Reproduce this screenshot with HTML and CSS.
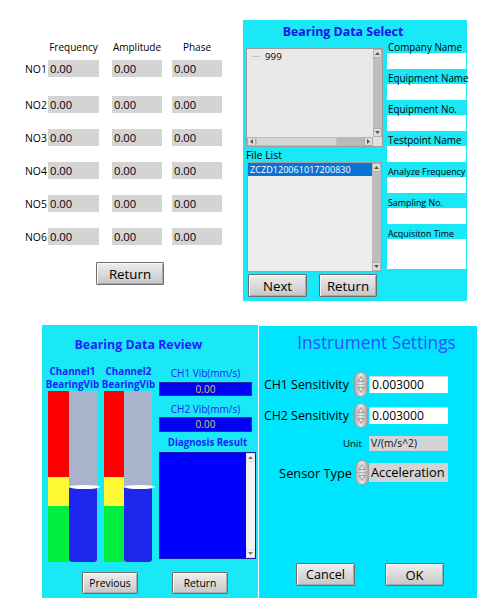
FILE: index.html
```html
<!DOCTYPE html>
<html>
<head>
<meta charset="utf-8">
<link rel="stylesheet" href="styles.css">
</head>
<body>
<div class="top">
  <section class="peaks">
    <div class="prow head"><span></span><span class="h w51">Frequency</span><span class="h w50">Amplitude</span><span class="h w50">Phase</span></div>
    <div class="prow r1"><span class="no">NO1</span><span class="val w51">0.00</span><span class="val w50">0.00</span><span class="val w50">0.00</span></div>
    <div class="prow r2"><span class="no">NO2</span><span class="val w51">0.00</span><span class="val w50">0.00</span><span class="val w50">0.00</span></div>
    <div class="prow rn"><span class="no">NO3</span><span class="val w51">0.00</span><span class="val w50">0.00</span><span class="val w50">0.00</span></div>
    <div class="prow rn"><span class="no">NO4</span><span class="val w51">0.00</span><span class="val w50">0.00</span><span class="val w50">0.00</span></div>
    <div class="prow rn"><span class="no">NO5</span><span class="val w51">0.00</span><span class="val w50">0.00</span><span class="val w50">0.00</span></div>
    <div class="prow rn"><span class="no">NO6</span><span class="val w51">0.00</span><span class="val w50">0.00</span><span class="val w50">0.00</span></div>
    <button class="btn peaks-return">Return</button>
  </section>

  <section class="select">
    <h2 class="sel-title">Bearing Data Select</h2>
    <div class="sel-body">
      <div class="sel-left">
        <div class="tree">
          <div class="tree-content"><span class="tree-line"></span><span class="tree-item">999</span></div>
          <div class="vscroll">
            <div class="sb-btn"><svg width="5" height="3" viewBox="0 0 5 3"><path d="M0 3 L2.5 0 L5 3 Z" fill="#555"/></svg></div>
            <div class="sb-track"></div>
            <div class="sb-btn"><svg width="5" height="3" viewBox="0 0 5 3"><path d="M0 0 L2.5 3 L5 0 Z" fill="#555"/></svg></div>
          </div>
          <div class="hscroll">
            <div class="sb-btn"><svg width="3" height="5" viewBox="0 0 3 5"><path d="M3 0 L0 2.5 L3 5 Z" fill="#555"/></svg></div>
            <div class="sb-htrack"><div class="sb-thumb"></div></div>
            <div class="sb-btn"><svg width="3" height="5" viewBox="0 0 3 5"><path d="M0 0 L3 2.5 L0 5 Z" fill="#555"/></svg></div>
          </div>
          <div class="sb-corner"></div>
        </div>
        <div class="fl-label">File List</div>
        <div class="filelist">
          <div class="fl-items"><div class="fl-sel">ZCZD120061017200830</div></div>
          <div class="vscroll">
            <div class="sb-btn"><svg width="5" height="3" viewBox="0 0 5 3"><path d="M0 3 L2.5 0 L5 3 Z" fill="#555"/></svg></div>
            <div class="sb-track"></div>
            <div class="sb-btn"><svg width="5" height="3" viewBox="0 0 5 3"><path d="M0 0 L2.5 3 L5 0 Z" fill="#555"/></svg></div>
          </div>
        </div>
        <div class="sel-btns">
          <button class="btn btn-next">Next</button>
          <button class="btn btn-sret">Return</button>
        </div>
      </div>
      <div class="sel-right">
        <div class="flabel">Company Name</div><div class="field"></div>
        <div class="flabel">Equipment Name</div><div class="field"></div>
        <div class="flabel">Equipment No.</div><div class="field"></div>
        <div class="flabel">Testpoint Name</div><div class="field"></div>
        <div class="flabel small">Analyze Frequency</div><div class="field"></div>
        <div class="flabel small">Sampling No.</div><div class="field"></div>
        <div class="flabel small">Acquisiton Time</div><div class="field tall"></div>
      </div>
    </div>
  </section>
</div>

<div class="bottom">
  <section class="review">
    <h2 class="rev-title">Bearing Data Review</h2>
    <div class="rev-body">
      <div class="chan chan1">
        <div class="chan-label">Channel1<br>BearingVib</div>
        <div class="meter">
          <div class="scale w21"><div class="red"></div><div class="yellow"></div><div class="green"></div></div>
          <div class="tube"><div class="fill" style="height:75px"></div><div class="knob" style="bottom:73px"></div></div>
        </div>
      </div>
      <div class="chan chan2">
        <div class="chan-label">Channel2<br>BearingVib</div>
        <div class="meter">
          <div class="scale w20"><div class="red"></div><div class="yellow"></div><div class="green"></div></div>
          <div class="tube"><div class="fill" style="height:75px"></div><div class="knob" style="bottom:73px"></div></div>
        </div>
      </div>
      <div class="rev-right">
        <div class="vlabel first">CH1 Vib(mm/s)</div>
        <div class="vbox b1">0.00</div>
        <div class="vlabel second">CH2 Vib(mm/s)</div>
        <div class="vbox b2">0.00</div>
        <div class="dlabel">Diagnosis Result</div>
        <div class="dbox">
          <div class="dtext"></div>
          <div class="dscroll">
            <div class="sb-btn light"><svg width="5" height="3" viewBox="0 0 5 3"><path d="M0 3 L2.5 0 L5 3 Z" fill="#777"/></svg></div>
            <div class="dtrack"></div>
            <div class="sb-btn light"><svg width="5" height="3" viewBox="0 0 5 3"><path d="M0 0 L2.5 3 L5 0 Z" fill="#777"/></svg></div>
          </div>
        </div>
      </div>
    </div>
    <div class="rev-btns">
      <button class="btn btn-prev">Previous</button>
      <button class="btn btn-rret">Return</button>
    </div>
  </section>

  <section class="settings">
    <h2 class="set-title">Instrument Settings</h2>
    <div class="srow sens first">
      <span class="slabel">CH1 Sensitivity</span>
      <svg class="spin" width="14" height="25" viewBox="0 0 14 25">
        <defs><linearGradient id="sg1" x1="0" x2="1"><stop offset="0" stop-color="#a9a9a9"/><stop offset="0.5" stop-color="#ececec"/><stop offset="1" stop-color="#a0a0a0"/></linearGradient></defs>
        <rect x="0.5" y="0.5" width="13" height="24" rx="6.5" fill="url(#sg1)" stroke="#9c9c9c"/>
        <line x1="1.5" y1="12.5" x2="12.5" y2="12.5" stroke="#b0b0b0"/>
        <path d="M4 9.5 L7 4.5 L10 9.5 Z" fill="none" stroke="#8a8a8a" stroke-width="0.8"/>
        <path d="M4 15.5 L7 20.5 L10 15.5 Z" fill="none" stroke="#8a8a8a" stroke-width="0.8"/>
      </svg>
      <span class="sinput">0.003000</span>
    </div>
    <div class="srow sens second">
      <span class="slabel">CH2 Sensitivity</span>
      <svg class="spin" width="14" height="25" viewBox="0 0 14 25">
        <defs><linearGradient id="sg2" x1="0" x2="1"><stop offset="0" stop-color="#a9a9a9"/><stop offset="0.5" stop-color="#ececec"/><stop offset="1" stop-color="#a0a0a0"/></linearGradient></defs>
        <rect x="0.5" y="0.5" width="13" height="24" rx="6.5" fill="url(#sg2)" stroke="#9c9c9c"/>
        <line x1="1.5" y1="12.5" x2="12.5" y2="12.5" stroke="#b0b0b0"/>
        <path d="M4 9.5 L7 4.5 L10 9.5 Z" fill="none" stroke="#8a8a8a" stroke-width="0.8"/>
        <path d="M4 15.5 L7 20.5 L10 15.5 Z" fill="none" stroke="#8a8a8a" stroke-width="0.8"/>
      </svg>
      <span class="sinput">0.003000</span>
    </div>
    <div class="srow unit">
      <span class="ulabel">Unit</span>
      <span class="ubox">V/(m/s^2)</span>
    </div>
    <div class="srow sensor">
      <span class="slabel stype">Sensor Type</span>
      <svg class="spin" width="14" height="25" viewBox="0 0 14 25">
        <defs><linearGradient id="sg3" x1="0" x2="1"><stop offset="0" stop-color="#a9a9a9"/><stop offset="0.5" stop-color="#ececec"/><stop offset="1" stop-color="#a0a0a0"/></linearGradient></defs>
        <rect x="0.5" y="0.5" width="13" height="24" rx="6.5" fill="url(#sg3)" stroke="#9c9c9c"/>
        <line x1="1.5" y1="12.5" x2="12.5" y2="12.5" stroke="#b0b0b0"/>
        <path d="M4 9.5 L7 4.5 L10 9.5 Z" fill="none" stroke="#8a8a8a" stroke-width="0.8"/>
        <path d="M4 15.5 L7 20.5 L10 15.5 Z" fill="none" stroke="#8a8a8a" stroke-width="0.8"/>
      </svg>
      <span class="sbox">Acceleration</span>
    </div>
    <div class="set-btns">
      <button class="btn btn-cancel">Cancel</button>
      <button class="btn btn-ok">OK</button>
    </div>
  </section>
</div>
</body>
</html>
```

FILE: styles.css
```css
* { box-sizing: border-box; }
html, body { margin: 0; padding: 0; background: #fff; }
body {
  width: 504px;
  height: 615px;
  overflow: hidden;
  font-family: "Open Sans", "Noto Sans", sans-serif;
  color: #000;
}
h2 { margin: 0; }

.btn {
  display: block;
  font-family: "Open Sans", "Noto Sans", sans-serif;
  color: #000;
  padding: 0;
  border: 1px solid #6f6f6f;
  border-radius: 1px;
  background: linear-gradient(#eeeeee, #c6c6c6);
  box-shadow: inset 1px 1px 0 #fafafa, inset -1px -1px 0 #a8a8a8;
  cursor: default;
}

/* ---------- top row ---------- */
.top { display: flex; height: 302px; }

.peaks {
  width: 243px;
  height: 302px;
  padding-top: 41px;
  background: #fff;
}
.prow {
  display: grid;
  grid-template-columns: 23px 64px 60px 50px;
  margin-left: 25px;
  align-items: center;
}
.prow.head { height: 12px; }
.prow .h { font-size: 10px; line-height: 12px; text-align: center; color: #000; }
.prow .no { font-size: 10.4px; color: #000; white-space: nowrap; }
.w51 { width: 51px; }
.w50 { width: 50px; }
.val {
  height: 17px;
  line-height: 17px;
  background: #d4d4d4;
  font-size: 11.2px;
  padding-left: 2px;
  color: #000;
}
.prow.r1 { margin-top: 7px; }
.prow.r2 { margin-top: 19px; }
.prow.rn { margin-top: 16px; }
.peaks-return {
  margin: 17px 0 0 96px;
  width: 68px;
  height: 23px;
  font-size: 13.3px;
}

.select {
  width: 224px;
  height: 281px;
  margin-top: 20px;
  background: #1ae8f7;
}
.sel-title {
  margin-top: 3px;
  width: 200px;
  line-height: 18px;
  font-size: 12.4px;
  font-weight: 700;
  text-align: center;
  color: #1212ee;
}
.sel-body { display: flex; margin-top: 1px; }
.sel-left { margin-left: 3px; width: 137px; }
.tree {
  margin-top: 6px;
  width: 137px;
  height: 99px;
  border: 1px solid #9c9c9c;
  background: #e9e9e9;
  display: grid;
  grid-template-columns: 1fr 9px;
  grid-template-rows: 1fr 9px;
}
.tree-content { padding-top: 1px; display: flex; align-items: center; height: 14px; }
.tree-line { width: 8px; height: 1px; background: #c4c4c4; margin: 0 5px 0 5px; }
.tree-item { font-size: 9.8px; color: #000; }
.vscroll { display: flex; flex-direction: column; background: #bdbdbd; }
.sb-btn {
  width: 9px;
  height: 9px;
  display: flex;
  align-items: center;
  justify-content: center;
  background: #dcdcdc;
  border: 1px solid #b0b0b0;
}
.sb-btn.light { background: #f4f4f4; border-color: #e0e0e0; }
.sb-track { flex: 1; background: #bdbdbd; }
.hscroll { display: flex; background: #bdbdbd; }
.sb-htrack { flex: 1; background: #b9b9b9; }
.sb-thumb { width: 81px; height: 9px; background: #d6d6d6; border: 1px solid #c0c0c0; }
.sb-corner { background: #e0e0e0; }

.fl-label {
  height: 15px;
  padding-top: 2px;
  line-height: 13px;
  font-size: 10.4px;
  color: #000;
}
.filelist {
  margin-left: 1px;
  width: 135px;
  height: 110px;
  border: 1px solid #a0a0a0;
  background: #ececec;
  display: grid;
  grid-template-columns: 1fr 9px;
}
.fl-sel {
  height: 13px;
  line-height: 13px;
  background: #0a74d4;
  color: #fff;
  font-size: 9.1px;
  padding-left: 2px;
  white-space: nowrap;
}
.sel-btns { display: flex; margin-top: 2px; padding-left: 2px; }
.btn-next { width: 59px; height: 23px; font-size: 13.3px; }
.btn-sret { width: 58px; height: 23px; font-size: 13.3px; margin-left: 12px; }

.sel-right { margin-left: 4px; width: 79px; }
.flabel {
  height: 11px;
  line-height: 11px;
  font-size: 9.9px;
  padding-left: 1px;
  white-space: nowrap;
  color: #000;
}
.flabel.small { font-size: 8.9px; }
.field { height: 16px; background: #fff; margin-bottom: 4px; }
.field.tall { height: 30px; }

/* ---------- bottom row ---------- */
.bottom { display: flex; }

.review {
  margin: 23px 0 0 42px;
  width: 216px;
  height: 273px;
  background: #1ae8f7;
}
.rev-title {
  margin-top: 11px;
  width: 193px;
  line-height: 18px;
  font-size: 12.4px;
  font-weight: 700;
  text-align: center;
  color: #1a22ff;
}
.rev-body { display: flex; }
.chan { width: 55px; }
.chan1 { margin-left: 3px; }
.chan2 { margin-left: 1px; }
.chan-label {
  margin-top: 11px;
  height: 26px;
  line-height: 13px;
  font-size: 9.8px;
  font-weight: 700;
  text-align: center;
  color: #1a22ff;
  white-space: nowrap;
}
.meter { display: flex; margin-left: 3px; height: 171px; }
.scale { display: flex; flex-direction: column; }
.scale.w21 { width: 21px; }
.scale.w20 { width: 20px; }
.red { height: 86px; background: #ff0000; }
.yellow { height: 29px; background: #fff935; }
.green { height: 56px; background: #00ee3e; }
.tube {
  position: relative;
  width: 28px;
  background: #a9b3cb;
  display: flex;
  flex-direction: column;
  justify-content: flex-end;
}
.fill { background: #1f26ee; border-radius: 0 0 3px 3px; }
.knob {
  position: absolute;
  left: 0;
  width: 31px;
  height: 4px;
  border-radius: 50%;
  background: #fff;
}
.rev-right { margin-left: 3px; width: 97px; }
.vlabel {
  width: 93px;
  line-height: 14px;
  font-size: 10px;
  text-align: center;
  color: #1a22ff;
  white-space: nowrap;
}
.vlabel.first { margin-top: 12px; }
.vlabel.second { margin-top: 6px; }
.vbox {
  width: 93px;
  background: #0000f2;
  border: 1px solid #2c2cb0;
  color: #dcc86c;
  font-size: 10px;
  text-align: center;
}
.vbox.b1 { margin-top: 2px; height: 14px; line-height: 12px; }
.vbox.b2 { margin-top: 1px; height: 15px; line-height: 13px; }
.dlabel {
  margin-top: 4px;
  width: 97px;
  line-height: 14px;
  font-size: 9.7px;
  font-weight: 700;
  text-align: center;
  color: #1a22ff;
  white-space: nowrap;
}
.dbox {
  margin-top: 2px;
  width: 97px;
  height: 107px;
  background: #0000ff;
  border: 1px solid #1a1ab0;
  display: grid;
  grid-template-columns: 1fr 9px;
}
.dscroll { display: flex; flex-direction: column; background: #f2f2f2; }
.dtrack { flex: 1; background: #f2f2f2; }
.rev-btns { display: flex; margin-top: 10px; }
.btn-prev { margin-left: 40px; width: 56px; height: 22px; font-size: 10.3px; }
.btn-rret { margin-left: 34px; width: 56px; height: 22px; font-size: 10.3px; }

.settings {
  margin-top: 24px;
  width: 219px;
  height: 272px;
  background: #00e5ff;
  border-left: 1px solid #fff;
}
.set-title {
  margin-top: 6px;
  padding-left: 17px;
  line-height: 22px;
  font-size: 17.3px;
  font-weight: 400;
  text-align: center;
  color: #2650ff;
  white-space: nowrap;
}
.srow {
  display: grid;
  grid-template-columns: 95px 15px 79px;
  align-items: center;
}
.srow.sens { height: 25px; }
.srow.sens.first { margin-top: 18px; }
.srow.sens.second { margin-top: 6px; }
.slabel {
  text-align: right;
  padding-right: 5px;
  font-size: 12.4px;
  white-space: nowrap;
  color: #000;
}
.slabel.stype { padding-right: 2px; font-size: 12.8px; }
.spin { display: block; }
.srow.sensor .spin { margin-left: 1px; }
.sinput {
  height: 17px;
  line-height: 17px;
  background: #fff;
  box-shadow: inset 1px 1px 0 #d6d6d6;
  font-size: 12.2px;
  padding-left: 3px;
  color: #000;
}
.srow.unit { margin-top: 8px; height: 15px; }
.ulabel {
  grid-column: 1 / 3;
  text-align: right;
  padding-right: 7px;
  font-size: 9.8px;
  color: #000;
}
.ubox {
  height: 15px;
  line-height: 15px;
  background: #d3d3d3;
  font-size: 10.3px;
  padding-left: 2px;
  color: #111;
}
.srow.sensor { margin-top: 9px; height: 25px; }
.sbox {
  height: 19px;
  line-height: 19px;
  background: #d3d3d3;
  font-size: 12.8px;
  padding-left: 2px;
  color: #000;
  white-space: nowrap;
}
.set-btns { display: flex; margin-top: 78px; }
.btn-cancel { margin-left: 37px; width: 59px; height: 23px; font-size: 12.6px; }
.btn-ok { margin-left: 30px; width: 59px; height: 23px; font-size: 13px; }
```
